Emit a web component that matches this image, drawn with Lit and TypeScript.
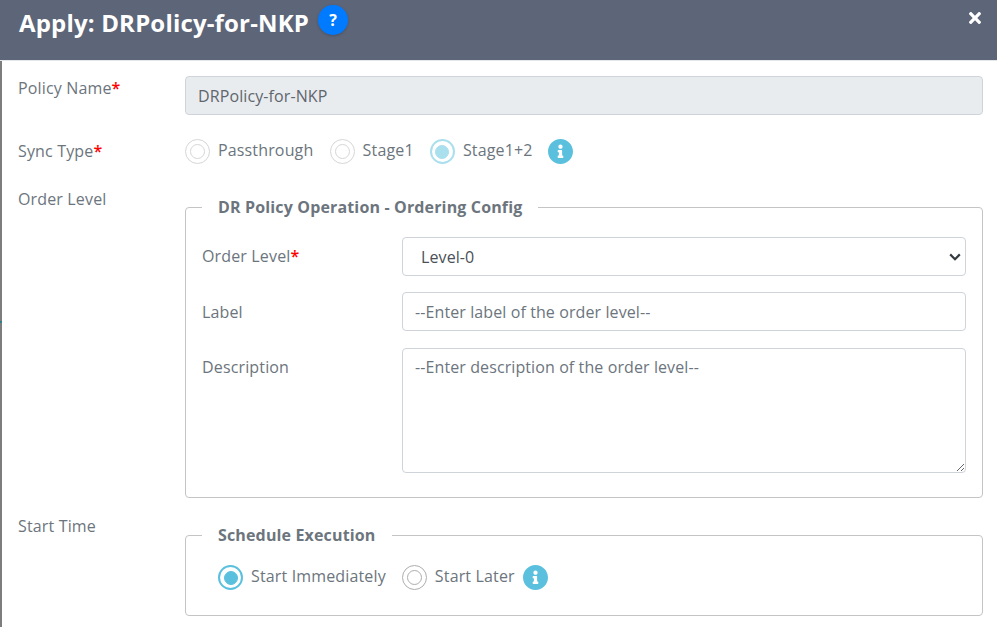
import { LitElement, html, css, svg } from "lit";
import { customElement } from "lit/decorators.js";

const infoPath = "M256 8C119.043 8 8 119.083 8 256c0 136.997 111.043 248 248 248s248-111.003 248-248C504 119.083 392.957 8 256 8zm0 110c23.196 0 42 18.804 42 42s-18.804 42-42 42-42-18.804-42-42 18.804-42 42-42zm56 254c0 6.627-5.373 12-12 12h-88c-6.627 0-12-5.373-12-12v-24c0-6.627 5.373-12 12-12h12v-64h-12c-6.627 0-12-5.373-12-12v-24c0-6.627 5.373-12 12-12h64c6.627 0 12 5.373 12 12v100h12c6.627 0 12 5.373 12 12v24z";
const timesPath = "M242.72 256l100.07-100.07c12.28-12.28 12.28-32.19 0-44.48l-22.24-22.24c-12.28-12.28-32.19-12.28-44.48 0L176 189.28 75.93 89.21c-12.28-12.28-32.19-12.28-44.48 0L9.21 111.45c-12.28 12.28-12.28 32.19 0 44.48L109.28 256 9.21 356.07c-12.28 12.28-12.28 32.19 0 44.48l22.24 22.24c12.28 12.28 32.2 12.28 44.48 0L176 322.72l100.07 100.07c12.28 12.28 32.2 12.28 44.48 0l22.24-22.24c12.28-12.28 12.28-32.19 0-44.48L242.72 256z";

const info = () => html`<svg class="info" viewBox="8 8 496 496" aria-hidden="true">${svg`<path d=${infoPath}></path>`}</svg>`;

@customElement("app-root")
export class AppRoot extends LitElement {
  static styles = css`
    :host { display: block; width: 997px; height: 627px; overflow: hidden; background: #fff;
      font-family: "Open Sans", sans-serif; font-size: 16px; line-height: 24px; color: #6c757d; }
    * { box-sizing: border-box; }
    .header { height: 61px; background: #5d6579; border-bottom: 1px solid #e4e6ea; padding: 5px 16px 0 19px;
      display: flex; align-items: flex-start; }
    h1 { margin: 0; font-size: 24px; line-height: 36px; font-weight: 700; color: #fff; letter-spacing: 0.17px; }
    .help { width: 30px; height: 30px; margin-left: 9px; border-radius: 50%; background: #007bff; color: #fff;
      font-weight: 700; font-size: 16px; line-height: 30px; text-align: center; flex: none;
      box-shadow: 0 1px 3px rgba(0,0,0,.2); }
    .close { width: 12px; height: 18px; margin: 4px 0 0 auto; fill: #fff; flex: none; }
    .body { border-left: 2px solid #7d7d7d;
      border-image: linear-gradient(#7d7d7d 0 260px, #2f7f8f 260px 262px, #7d7d7d 262px) 1;
      padding: 15px 14px 0 16px; height: 566px; letter-spacing: 0.15px; }
    .row { display: grid; grid-template-columns: 167px 1fr; }
    .lbl { display: block; }
    .req { color: #f00; font-weight: 600; }
    .control { display: block; width: 100%; height: 39px; border: 1px solid #ced4da; border-radius: 4px;
      padding: 6px 12px; font: inherit; line-height: 24px; color: #5f666d; background: #fff; outline: none;
      letter-spacing: 0.1px; }
    .control::placeholder { color: #6c757d; opacity: 1; }
    .control[readonly] { background: #e9ecef; }
    select.control { color: #495057; padding-left: 18px; appearance: none; -webkit-appearance: none;
      background: #fff url("data:image/svg+xml,%3Csvg xmlns='http://www.w3.org/2000/svg' width='12' height='8' viewBox='0 0 12 8'%3E%3Cpath d='M1.2 1.4 6 6.2l4.8-4.8' fill='none' stroke='%23343a40' stroke-width='2.2'/%3E%3C/svg%3E") no-repeat right 4px center; }
    textarea.control { height: 125px; resize: vertical; }
    .r2 { margin-top: 24px; height: 26px; }
    .r3 { margin-top: 22px; }
    .r4 { margin-top: 16px; }
    .radios { display: flex; align-items: center; height: 25px; }
    .radio { display: flex; align-items: center; gap: 8px; margin-right: 16.2px; }
    .radio span { position: relative; top: -2px; }
    .dot { width: 25px; height: 25px; border-radius: 50%; border: 1px solid #d6d6d6; display: flex;
      align-items: center; justify-content: center; flex: none; }
    .dot::after { content: ""; width: 13px; height: 13px; border-radius: 50%; border: 1px solid #d6d6d6; }
    .dot.sel { border: 2px solid #aadfee; }
    .dot.sel::after { background: #aadfee; border-color: #aadfee; width: 12px; height: 12px; }
    .dot.on { border: 2px solid #5bc0de; }
    .dot.on::after { background: #5bc0de; border-color: #5bc0de; width: 12px; height: 12px; }
    .dot.idle { border-color: #adadad; }
    .dot.idle::after { border-color: #adadad; }
    .info { width: 25px; height: 25px; fill: #5bc0de; flex: none; display: block; margin-left: -0.5px; }
    fieldset { margin: 0; padding: 0 16px; border: 1px solid #c4c4c4; border-radius: 4px; min-width: 0; }
    legend { padding: 0 16px; font-weight: 700; line-height: 24px; font-size: 16px; color: #6c757d; letter-spacing: 0.15px; }
    .first { padding-bottom: 24px; padding-top: 18px; margin-top: 8px; }
    .frow { display: grid; grid-template-columns: 200px 1fr; margin-bottom: 17px; }
    .frow:first-of-type { margin-bottom: 16px; }
    .frow:last-child { margin-bottom: 0; }
    .frow .lbl { padding-top: 7px; }
    .frow:nth-child(3) .lbl { padding-top: 8px; }
    .second { height: 93px; margin-top: 9px; padding: 18px 16px 0 32px; }
    .second legend { margin-left: -16px; }
    .second .radio { margin-right: 16px; }
    .second .info { margin-left: -8px; }
  `;

  render() {
    return html`
      <div class="header">
        <h1>Apply: DRPolicy-for-NKP</h1>
        <div class="help">?</div>
        <svg class="close" viewBox="0 0 352 512" aria-hidden="true">${svg`<path d=${timesPath}></path>`}</svg>
      </div>
      <div class="body">
        <div class="row r1">
          <label class="lbl">Policy Name<span class="req">*</span></label>
          <input class="control" readonly .value=${"DRPolicy-for-NKP"} />
        </div>
        <div class="row r2">
          <label class="lbl">Sync Type<span class="req">*</span></label>
          <div class="radios">
            <div class="radio"><i class="dot"></i><span>Passthrough</span></div>
            <div class="radio"><i class="dot"></i><span>Stage1</span></div>
            <div class="radio"><i class="dot sel"></i><span>Stage1+2</span></div>
            ${info()}
          </div>
        </div>
        <div class="row r3">
          <label class="lbl">Order Level</label>
          <fieldset class="first">
            <legend>DR Policy Operation - Ordering Config</legend>
            <div class="frow">
              <label class="lbl">Order Level<span class="req">*</span></label>
              <select class="control"><option>Level-0</option></select>
            </div>
            <div class="frow">
              <label class="lbl">Label</label>
              <input class="control" placeholder="--Enter label of the order level--" />
            </div>
            <div class="frow">
              <label class="lbl">Description</label>
              <textarea class="control" placeholder="--Enter description of the order level--"></textarea>
            </div>
          </fieldset>
        </div>
        <div class="row r4">
          <label class="lbl">Start Time</label>
          <fieldset class="second">
            <legend>Schedule Execution</legend>
            <div class="radios">
              <div class="radio"><i class="dot on"></i><span>Start Immediately</span></div>
              <div class="radio"><i class="dot idle"></i><span>Start Later</span></div>
              ${info()}
            </div>
          </fieldset>
        </div>
      </div>
    `;
  }
}
